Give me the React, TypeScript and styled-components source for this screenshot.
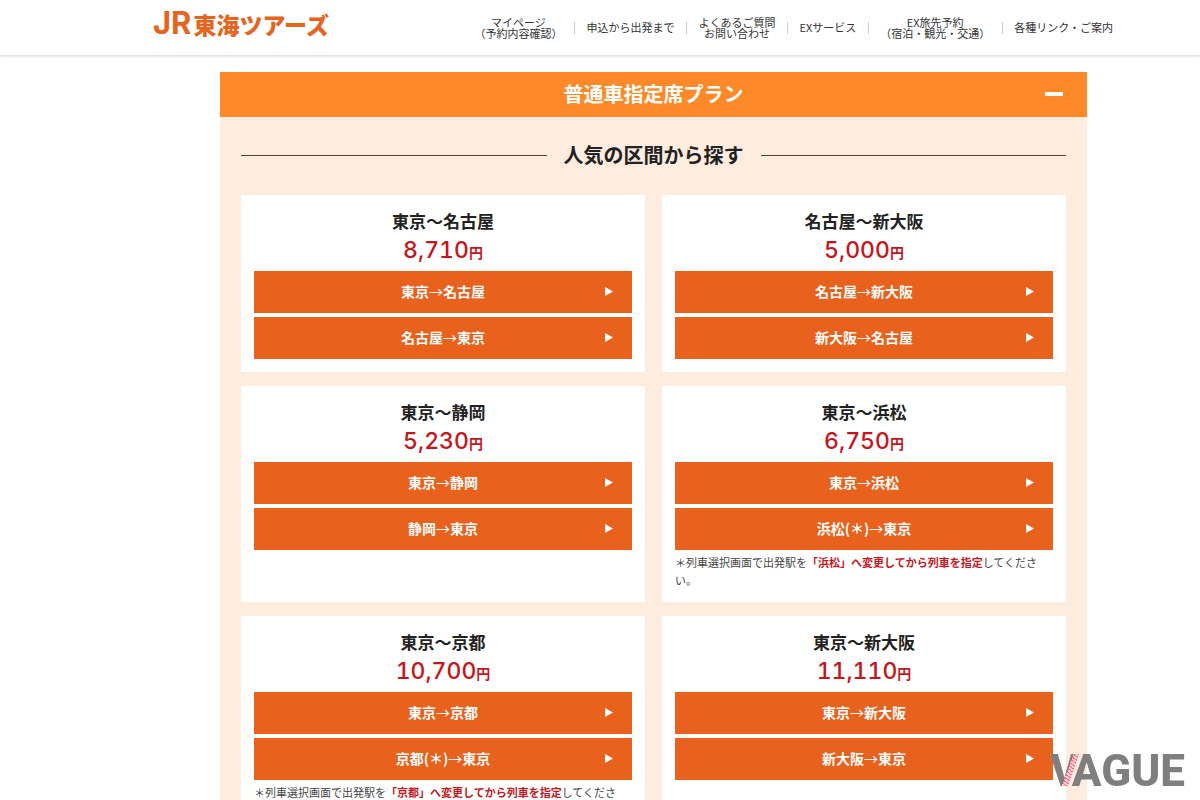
import React, { useState } from "react";
import styled, { createGlobalStyle } from "styled-components";

const GlobalStyle = createGlobalStyle`
  *, *::before, *::after { box-sizing: border-box; }
  body {
    margin: 0;
    background: #fff;
    color: #222;
    font-family: "Noto Sans CJK JP", "Noto Sans", sans-serif;
    font-size: 14px;
  }
  h1, h2, h3, p, ul { margin: 0; padding: 0; }
`;

const Header = styled.header`
  display: flex;
  justify-content: space-between;
  height: 56px;
  padding: 0 87px 0 153px;
  background: #fff;
  border-bottom: 1px solid #e4e4e4;
  box-shadow: 0 1px 2px rgba(0, 0, 0, 0.1);
`;

const Logo = styled.a`
  display: flex;
  align-items: baseline;
  gap: 2px;
  color: #e5651f;
  font-size: 23px;
  font-weight: 900;
  line-height: 45px;
  text-decoration: none;
  white-space: nowrap;
`;

const LogoLatin = styled.span`
  font-family: Inter, sans-serif;
  font-size: 31px;
  font-weight: 700;
`;

const Nav = styled.nav`
  display: flex;
  align-items: center;
`;

const NavList = styled.ul`
  display: flex;
  align-items: center;
  list-style: none;
`;

const NavItem = styled.li`
  display: flex;
  align-items: center;
  &:not(:first-child)::before {
    content: "";
    width: 1px;
    height: 12px;
    background: #ccc;
  }
  &:last-child a { padding-right: 0; }
`;

const NavLink = styled.a`
  padding: 0 12px 0 11px;
  color: #333;
  font-size: 11px;
  line-height: 11px;
  text-align: center;
  text-decoration: none;
  white-space: pre-line;
`;

const Panel = styled.main`
  margin: 16px 113px 0 220px;
  background: #feecdf;
`;

const PanelToggle = styled.button`
  display: grid;
  grid-template-columns: 1fr auto 1fr;
  align-items: center;
  width: 100%;
  height: 45px;
  padding: 0 24px 2px;
  border: 0;
  background: #fe8928;
  color: #fff;
  font-family: inherit;
  font-size: 20px;
  font-weight: 700;
  cursor: pointer;
`;

const PanelTitle = styled.span`
  grid-column: 2;
`;

const Minus = styled.span`
  justify-self: end;
  width: 18px;
  height: 4px;
  background: #fff;
`;

const PanelBody = styled.div`
  padding: 23px 21px 21px;
`;

const Heading = styled.h2`
  display: flex;
  align-items: center;
  gap: 17px;
  margin-bottom: 25px;
  font-size: 20px;
  font-weight: 700;
  line-height: 30px;
  &::before, &::after {
    content: "";
    flex: 1;
    height: 1px;
    background: #4a4541;
  }
`;

const Grid = styled.div`
  display: grid;
  grid-template-columns: 1fr 1fr;
  gap: 14px 17px;
`;

const Card = styled.section`
  padding: 13px;
  background: #fff;
`;

const Route = styled.h3`
  font-size: 17px;
  font-weight: 700;
  line-height: 25px;
  text-align: center;
`;

const Price = styled.p`
  margin-bottom: 4px;
  color: #c4161c;
  font-family: Inter, "Noto Sans CJK JP", sans-serif;
  font-size: 23px;
  font-weight: 500;
  font-variant-numeric: tabular-nums;
  line-height: 34px;
  text-align: center;
`;

const Yen = styled.span`
  font-size: 14px;
  font-weight: 700;
  line-height: 14px;
`;

const Links = styled.div`
  display: grid;
  gap: 4px;
`;

const RouteLink = styled.a`
  display: grid;
  grid-template-columns: 1fr auto 1fr;
  align-items: center;
  height: 42px;
  padding: 0 18px 2px;
  background: #e8611d;
  color: #fff;
  font-weight: 700;
  text-decoration: none;
`;

const RouteName = styled.span`
  grid-column: 2;
`;

const Arrow = styled.span`
  font-weight: 400;
`;

const Triangle = styled.svg`
  justify-self: end;
  width: 9px;
  height: 10px;
  fill: #fff;
`;

const Note = styled.p`
  margin-top: 3px;
  color: #444;
  font-size: 11px;
  line-height: 18px;
  strong { color: #c4161c; }
`;

const Watermark = styled.div`
  position: fixed;
  right: 15px;
  bottom: 4px;
  color: #7f7f7f;
  font-family: Roboto, sans-serif;
  font-size: 44px;
  font-weight: 800;
  line-height: 50px;
`;

const HatchedV = styled.span`
  margin-right: -7px;
  background:
    linear-gradient(110deg, #7f7f7f 0 56%, transparent 56%),
    repeating-linear-gradient(35deg, #f0708a 0 1px, #fbc6cc 1px 3px);
  background-clip: text;
  -webkit-background-clip: text;
  color: transparent;
`;

const navItems = [
  "マイページ\n（予約内容確認）",
  "申込から出発まで",
  "よくあるご質問\nお問い合わせ",
  "EXサービス",
  "EX旅先予約\n（宿泊・観光・交通）",
  "各種リンク・ご案内",
];

type Fare = { from: string; to: string; price: string; changeAt?: string };

const fares: Fare[] = [
  { from: "東京", to: "名古屋", price: "8,710" },
  { from: "名古屋", to: "新大阪", price: "5,000" },
  { from: "東京", to: "静岡", price: "5,230" },
  { from: "東京", to: "浜松", price: "6,750", changeAt: "浜松" },
  { from: "東京", to: "京都", price: "10,700", changeAt: "京都" },
  { from: "東京", to: "新大阪", price: "11,110" },
];

function Direction({ from, to }: { from: string; to: string }) {
  return (
    <RouteLink href="#">
      <RouteName>
        {from}
        <Arrow>→</Arrow>
        {to}
      </RouteName>
      <Triangle viewBox="0 0 9 10" aria-hidden="true">
        <path d="M0 1 8 5.5 0 10Z" />
      </Triangle>
    </RouteLink>
  );
}

function FareCard({ from, to, price, changeAt }: Fare) {
  return (
    <Card>
      <Route>{from}～{to}</Route>
      <Price>
        {price}
        <Yen>円</Yen>
      </Price>
      <Links>
        <Direction from={from} to={to} />
        <Direction from={changeAt ? `${to}(＊)` : to} to={from} />
      </Links>
      {changeAt && (
        <Note>
          ＊列車選択画面で出発駅を<strong>「{changeAt}」へ変更してから列車を指定</strong>してください。
        </Note>
      )}
    </Card>
  );
}

export default function App() {
  const [open, setOpen] = useState(true);
  return (
    <>
      <GlobalStyle />
      <Header>
        <Logo href="#">
          <LogoLatin>JR</LogoLatin>東海ツアーズ
        </Logo>
        <Nav>
          <NavList>
            {navItems.map((label) => (
              <NavItem key={label}>
                <NavLink href="#">{label}</NavLink>
              </NavItem>
            ))}
          </NavList>
        </Nav>
      </Header>
      <Panel>
        <PanelToggle type="button" aria-expanded={open} onClick={() => setOpen(!open)}>
          <PanelTitle>普通車指定席プラン</PanelTitle>
          <Minus />
        </PanelToggle>
        {open && (
          <PanelBody>
            <Heading>人気の区間から探す</Heading>
            <Grid>
              {fares.map((fare) => (
                <FareCard key={fare.from + fare.to} {...fare} />
              ))}
            </Grid>
          </PanelBody>
        )}
      </Panel>
      <Watermark>
        <HatchedV>V</HatchedV>AGUE
      </Watermark>
    </>
  );
}
